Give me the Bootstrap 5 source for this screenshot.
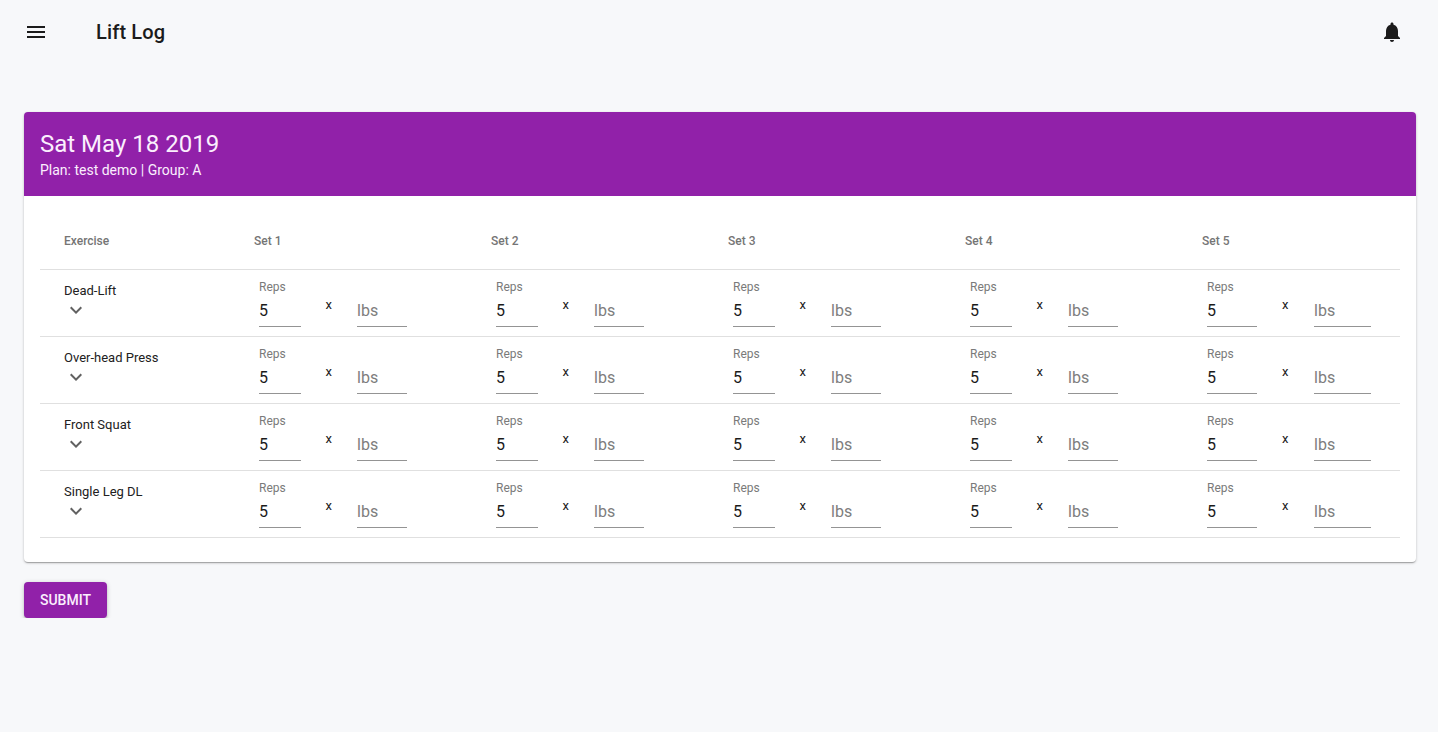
<!DOCTYPE html>
<html lang="en">
<head>
<meta charset="utf-8">
<meta name="viewport" content="width=device-width, initial-scale=1">
<title>Lift Log</title>
<link href="https://cdn.jsdelivr.net/npm/bootstrap@5.3.0/dist/css/bootstrap.min.css" rel="stylesheet">
<style>
  body { background: #f7f8fa; font-family: Roboto, "Liberation Sans", sans-serif; color: #212121; }
  .topbar { height: 64px; padding: 0 34px 0 24px; }
  .topbar h1 { font-size: 20px; line-height: 32px; font-weight: 500; letter-spacing: .15px; margin-left: 48px; color: #1b1b1b; }
  .icon { width: 24px; height: 24px; fill: currentColor; display: block; }
  .topbar .icon { fill: #1b1b1b; }
  .log-card { margin: 48px 22px 0 24px; border: 0; border-radius: 4px; box-shadow: 0 1px 3px rgba(0,0,0,.2), 0 1px 1px rgba(0,0,0,.14), 0 2px 1px -1px rgba(0,0,0,.12); }
  .log-head { height: 84px; padding: 16px; background: #9121a9; color: #fbeffd; border: 0; border-radius: 4px 4px 0 0 !important; }
  .log-head h2 { font-size: 24px; line-height: 32px; font-weight: 400; }
  .log-head p { font-size: 14px; line-height: 20px; }
  .log-body { padding: 16px 16px 24px; }
  .log-table { table-layout: fixed; border-collapse: separate; border-spacing: 0; }
  .log-table > :not(caption) > * > * { border-bottom: 1px solid #e0e0e0; padding: 0 0 0 24px; background: transparent; box-shadow: none; }
  .log-table thead th { height: 58px; font-size: 12px; font-weight: 500; color: #757575; vertical-align: middle; }
  .log-table tbody td { height: 67px; font-size: 13px; vertical-align: top; color: #212121; }
  .exercise { padding-top: 11px; line-height: 20px; }
  .exercise .icon { fill: #616161; margin-top: -3px; }
  .set-grid { padding: 8px 0 0 5px; height: 57px; }
  .field { width: 42px; }
  .field label { display: block; height: 17px; font-size: 12px; line-height: 19px; color: #7a7a7a; }
  .field .form-control { height: 32px; padding: 0; border: 0; border-bottom: 1px solid #949494; border-radius: 0; font-size: 16px; line-height: 31px; color: #1b1b1b; background: none; }
  .field .form-control::placeholder { color: #7d7d7d; opacity: 1; }
  .weight { width: 50px; padding-top: 17px; }
  .times { width: 56px; padding: 17px 0 0 24.500px; line-height: 20px; font-size: 13px; }
  td:last-child .field { width: 50px; }
  td:last-child .times { width: 57px; padding-left: 25px; }
  td:last-child .weight { width: 57px; }
  .btn-submit { --bs-btn-color: #fbeffd; --bs-btn-bg: #9121a9; --bs-btn-hover-color: #fff; --bs-btn-hover-bg: #7b1fa2; margin: 20px 0 0 24px; width: 83px; height: 36px; padding: 0; border: 0; border-radius: 4px; font-size: 14px; font-weight: 500; box-shadow: 0 1px 5px rgba(0,0,0,.2), 0 2px 2px rgba(0,0,0,.14), 0 3px 1px -2px rgba(0,0,0,.12) !important; }
</style>
</head>
<body>
<header class="topbar d-flex align-items-center">
  <svg class="icon" viewBox="0 0 24 24"><path d="M3 18h18v-2H3v2zm0-5h18v-2H3v2zm0-7v2h18V6H3z"/></svg>
  <h1 class="mb-0">Lift Log</h1>
  <svg class="icon ms-auto" viewBox="0 0 24 24"><path d="M12 22c1.100 0 2-.9 2-2h-4c0 1.100.890 2 2 2zm6-6v-5c0-3.070-1.640-5.640-4.500-6.320V4c0-.830-.670-1.500-1.500-1.500s-1.500.670-1.500 1.500v.680C7.630 5.360 6 7.920 6 11v5l-2 2v1h16v-1l-2-2z"/></svg>
</header>
<main>
  <section class="card log-card">
    <div class="card-header log-head">
      <h2 class="mb-0">Sat May 18 2019</h2>
      <p class="mb-0">Plan: test demo | Group: A</p>
    </div>
    <div class="card-body log-body">
      <table class="table log-table mb-0">
        <colgroup><col style="width:190px"><col style="width:237px"><col style="width:237px"><col style="width:237px"><col style="width:237px"><col></colgroup>
        <thead><tr><th>Exercise</th><th>Set 1</th><th>Set 2</th><th>Set 3</th><th>Set 4</th><th>Set 5</th></tr></thead>
        <tbody id="rows"></tbody>
      </table>
    </div>
  </section>
  <button type="button" class="btn btn-submit">SUBMIT</button>
</main>
<script src="https://cdn.jsdelivr.net/npm/bootstrap@5.3.0/dist/js/bootstrap.bundle.min.js"></script>
<script>
  const exercises = ['Dead-Lift', 'Over-head Press', 'Front Squat', 'Single Leg DL'];
  const setCell = (r, s) => `<td><div class="set-grid d-flex">
    <div class="field"><label for="reps-${r}-${s}">Reps</label><input class="form-control" id="reps-${r}-${s}" value="5"></div>
    <span class="times">x</span>
    <div class="field weight"><input class="form-control" aria-label="Weight" placeholder="lbs"></div>
  </div></td>`;
  document.getElementById('rows').innerHTML = exercises.map((name, r) => `<tr>
    <td><div class="exercise">${name}<svg class="icon" viewBox="0 0 24 24"><path d="M7.410 8.590 12 13.170l4.590-4.580L18 10l-6 6-6-6z"/></svg></div></td>
    ${[1, 2, 3, 4, 5].map(s => setCell(r, s)).join('')}</tr>`).join('');
</script>
</body>
</html>
